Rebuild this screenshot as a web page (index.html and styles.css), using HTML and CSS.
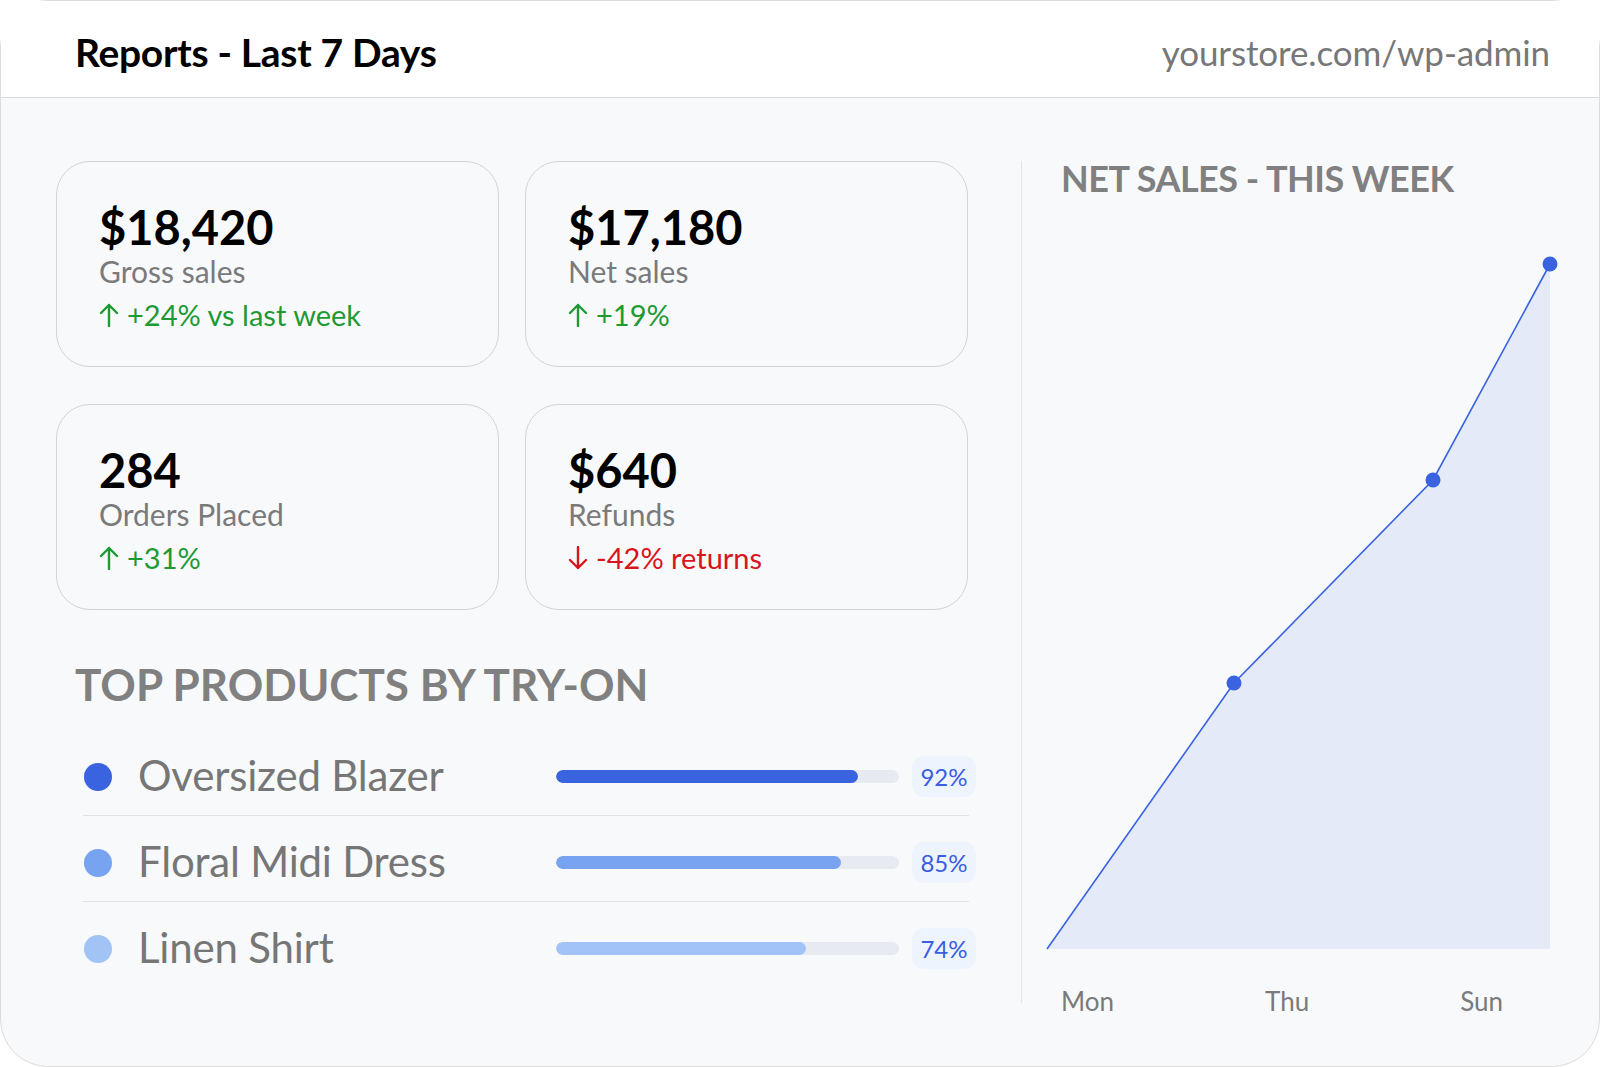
FILE: index.html
```html
<!DOCTYPE html>
<html lang="en">
<head>
    <meta charset="UTF-8">
    <meta name="viewport" content="width=device-width, initial-scale=1.0">
    <title>Reports - Last 7 Days</title>
    <link rel="stylesheet" href="styles.css">
</head>
<body>

<div class="frame">

    <header class="topbar">
        <h1>Reports - Last 7 Days</h1>
        <span class="url">yourstore.com/wp-admin</span>
    </header>

    <main class="content">

        <section class="left">
            <div class="cards">
                <div class="card">
                    <div class="value">$18,420</div>
                    <div class="label">Gross sales</div>
                    <div class="delta up">
                        <svg class="arrow" viewBox="0 0 20 24"><path d="M10 23V2M2 10l8-8 8 8"/></svg>
                        +24% vs last week
                    </div>
                </div>
                <div class="card">
                    <div class="value">$17,180</div>
                    <div class="label">Net sales</div>
                    <div class="delta up">
                        <svg class="arrow" viewBox="0 0 20 24"><path d="M10 23V2M2 10l8-8 8 8"/></svg>
                        +19%
                    </div>
                </div>
                <div class="card">
                    <div class="value">284</div>
                    <div class="label">Orders Placed</div>
                    <div class="delta up">
                        <svg class="arrow" viewBox="0 0 20 24"><path d="M10 23V2M2 10l8-8 8 8"/></svg>
                        +31%
                    </div>
                </div>
                <div class="card">
                    <div class="value">$640</div>
                    <div class="label">Refunds</div>
                    <div class="delta down">
                        <svg class="arrow" viewBox="0 0 20 24"><path d="M10 1v21M2 14l8 8 8-8"/></svg>
                        -42% returns
                    </div>
                </div>
            </div>

            <h2 class="section-title">TOP PRODUCTS BY TRY-ON</h2>

            <ul class="products">
                <li class="product">
                    <span class="dot c1"></span>
                    <span class="name">Oversized Blazer</span>
                    <span class="track"><span class="fill c1" style="width: 88%"></span></span>
                    <span class="badge">92%</span>
                </li>
                <li class="product">
                    <span class="dot c2"></span>
                    <span class="name">Floral Midi Dress</span>
                    <span class="track"><span class="fill c2" style="width: 83%"></span></span>
                    <span class="badge">85%</span>
                </li>
                <li class="product">
                    <span class="dot c3"></span>
                    <span class="name">Linen Shirt</span>
                    <span class="track"><span class="fill c3" style="width: 73%"></span></span>
                    <span class="badge">74%</span>
                </li>
            </ul>
        </section>

        <section class="right">
            <h2 class="chart-title">NET SALES - THIS WEEK</h2>

            <!-- net sales line: Mon -> Sun -->
            <svg class="chart" viewBox="0 0 528 720" width="528" height="720">
                <polygon class="area" points="25,709 212,443 411,240 528,24 528,709"/>
                <polyline class="line" points="25,709 212,443 411,240 528,24"/>
                <circle class="point" cx="212" cy="443" r="7.5"/>
                <circle class="point" cx="411" cy="240" r="7.5"/>
                <circle class="point" cx="528" cy="24" r="7.5"/>
            </svg>

            <div class="days">
                <span>Mon</span>
                <span>Thu</span>
                <span>Sun</span>
            </div>
        </section>

    </main>

</div>

</body>
</html>
```

FILE: styles.css
```css
body {
    margin: 0;
    background-color: #ffffff;
    font-family: Lato, "Open Sans", Arial, sans-serif;
}

.frame {
    width: 1600px;
    height: 1067px;
    box-sizing: border-box;
    border: 1px solid #dcdcdc;
    border-radius: 48px;
    background-color: #f8f9fb;
}

/* header */

.topbar {
    height: 97px;
    box-sizing: border-box;
    background-color: #ffffff;
    border-bottom: 1px solid #d9d9d9;
    display: flex;
    align-items: center;
    justify-content: space-between;
    padding: 5px 49px 0 74px;
}

.topbar h1 {
    margin: 0;
    font-size: 39px;
    font-weight: 700;
    color: #000;
    letter-spacing: -0.3px;
}

.url {
    font-size: 35px;
    color: #777;
    letter-spacing: -0.1px;
}

/* main */

.content {
    display: flex;
    padding: 63px 0 0 55px;
}

.left {
    width: 912px;
}

.cards {
    display: grid;
    grid-template-columns: 443px 443px;
    grid-auto-rows: 206px;
    column-gap: 26px;
    row-gap: 37px;
}

.card {
    box-sizing: border-box;
    border: 1px solid #d4d4d8;
    border-radius: 34px;
    padding: 42px 0 0 42px;
}

.value {
    font-size: 47px;
    line-height: 46px;
    font-weight: 700;
    color: #000;
}

.label {
    margin-top: 2px;
    font-size: 30px;
    line-height: 38px;
    color: #7a7a7a;
}

.delta {
    margin-top: 6px;
    font-size: 29px;
    line-height: 38px;
    display: flex;
    align-items: center;
    gap: 8px;
}

.delta.up {
    color: #1e9a34;
}

.delta.down {
    color: #d8141c;
}

.arrow {
    width: 20px;
    height: 24px;
    fill: none;
    stroke: currentColor;
    stroke-width: 2.4;
    stroke-linecap: round;
    stroke-linejoin: round;
}

.section-title {
    margin: 52px 0 0 19px;
    font-size: 44px;
    line-height: 44px;
    font-weight: 700;
    color: #808080;
}

.products {
    list-style: none;
    margin: 24px 0 0 27px;
    padding: 0;
    width: 886px;
}

.product {
    display: flex;
    align-items: center;
    height: 41px;
    padding: 26px 0 18px 0;
    border-bottom: 1px solid #e2e3e8;
}

.product:last-child {
    border-bottom: none;
}

.dot {
    width: 28px;
    height: 28px;
    border-radius: 50%;
    margin-left: 1px;
    flex-shrink: 0;
}

.name {
    flex: 1;
    margin: -4px 0 0 26px;
    font-size: 42px;
    color: #767676;
    letter-spacing: -0.2px;
}

.track {
    width: 343px;
    height: 13px;
    border-radius: 7px;
    background-color: #e8eaf2;
    overflow: hidden;
}

.fill {
    display: block;
    height: 100%;
    border-radius: 7px;
}

.c1 {
    background-color: #3a63e0;
}

.c2 {
    background-color: #77a3f1;
}

.c3 {
    background-color: #a1c3f6;
}

.badge {
    width: 64px;
    height: 41px;
    margin: 0 -7px 0 13px;
    border-radius: 12px;
    background-color: #eef4fe;
    color: #3b5de0;
    font-size: 24px;
    display: flex;
    align-items: center;
    justify-content: center;
}

/* chart */

.right {
    width: 528px;
    height: 842px;
    margin-left: 53px;
    border-left: 1px solid #e4e4e8;
}

.chart-title {
    margin: -2px 0 0 39px;
    font-size: 36px;
    line-height: 39px;
    font-weight: 700;
    color: #808080;
    letter-spacing: -0.5px;
}

.chart {
    display: block;
    margin-top: 42px;
    overflow: visible;
}

.area {
    fill: #e5eaf8;
}

.line {
    fill: none;
    stroke: #3a63e0;
    stroke-width: 1.6;
}

.point {
    fill: #3a63e0;
}

.days {
    display: flex;
    justify-content: space-between;
    margin: 26px 47px 0 39px;
    font-size: 26px;
    line-height: 30px;
    color: #7a7a7a;
}
```
